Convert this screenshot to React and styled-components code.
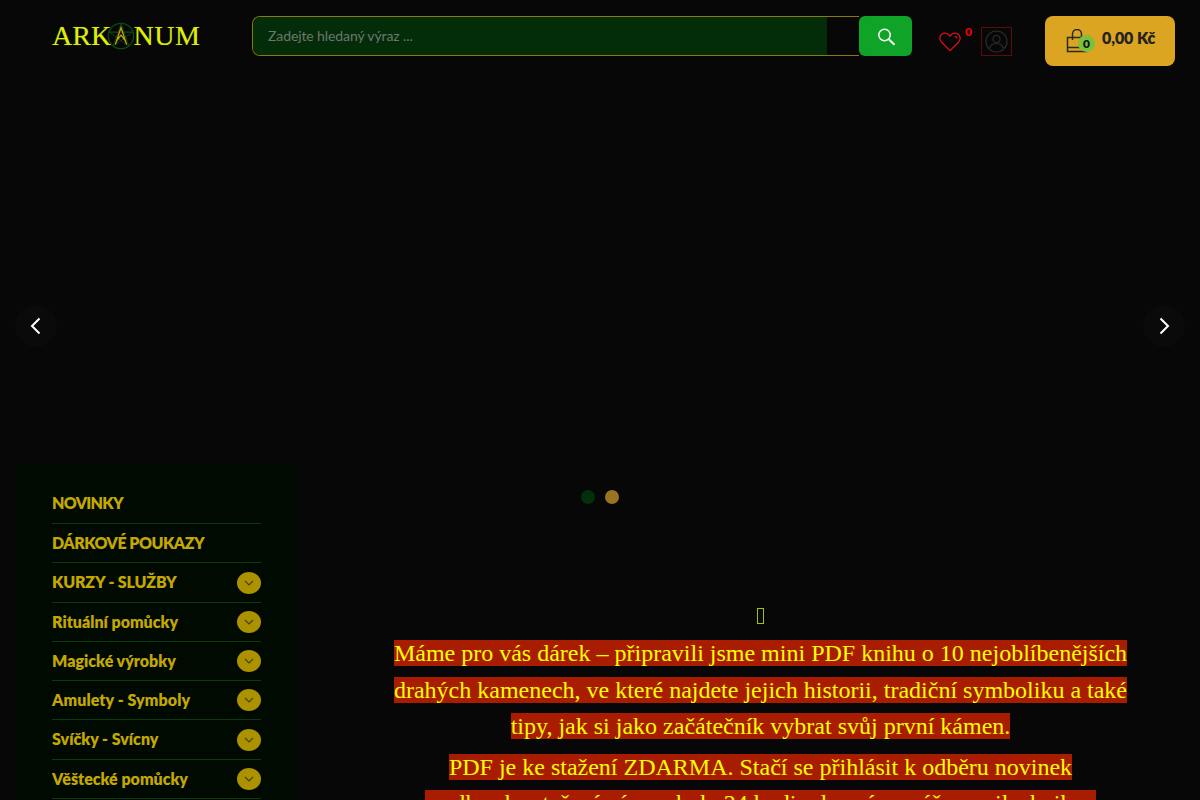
import React from 'react';
import styled, { createGlobalStyle } from 'styled-components';

const Global = createGlobalStyle`
  html, body { margin: 0; padding: 0; height: 800px; overflow: hidden; background: #070708; }
  * { box-sizing: border-box; }
  body { font-family: "Lato", "Noto Sans", sans-serif; }
`;
const Page = styled.div`width: 1200px; height: 800px; overflow: hidden; background: #070708;`;
const Header = styled.header`
  height: 72px; display: flex; align-items: flex-start; padding: 16px 25px 0 52px;
`;
const LogoBox = styled.div`width: 200px; height: 40px; display: flex; align-items: center;`;
const LogoText = styled.div`
  display: flex; align-items: center;
  font-family: "Liberation Serif", serif; font-size: 28px; line-height: 40px; color: #eaea00; letter-spacing: 0.1px;
  text-shadow: 0 0 1px #0f7a18;
`;
const LogoMark = styled.svg`margin: 0 -3px 0 -5px; flex: none;`;
const LogoTail = styled.span`letter-spacing: 0.6px;`;
const SearchForm = styled.form`width: 660px; height: 40px; display: flex; position: relative; margin: 0;`;
const SearchField = styled.div`
  flex: 1; height: 40px; display: flex; border: 1px solid #8a7a08; border-right: 0; border-radius: 8px 0 0 8px; overflow: hidden;
`;
const SearchInput = styled.div`
  width: 574px; background: #032d09; color: #6f756f; font-size: 14px; line-height: 38px; padding-left: 15px; letter-spacing: -0.1px;
`;
const SearchButton = styled.div`
  width: 53px; height: 40px; background: #0fa327; border-radius: 6px; display: flex; align-items: center; justify-content: center;
`;
const Wish = styled.div`position: relative; width: 42px; height: 40px; margin-left: 27px; padding-top: 16px;`;
const WishCount = styled.span`
  position: absolute; left: 26px; top: 9px; color: #f00000; font-size: 12px; font-weight: 900; line-height: 14px;
`;
const UserBox = styled.div`
  width: 31px; height: 29px; margin-top: 11px; border: 1px solid #5c0c0c; display: flex; align-items: center; justify-content: center;
`;
const Cart = styled.div`
  width: 130px; height: 50px; margin-left: 33px; background: #dba521; border-radius: 8px; display: flex; align-items: flex-start; padding: 12px 0 0 21px;
  position: relative; color: #23231f;
`;
const CartBadge = styled.span`
  position: absolute; left: 33px; top: 19px; width: 17px; height: 17px; border-radius: 50%; background: #79c13e; color: #15180f;
  font-size: 12px; font-weight: 800; display: flex; align-items: center; justify-content: center;
`;
const CartPrice = styled.span`margin-left: 14px; font-size: 16px; font-weight: 800; line-height: 20px; letter-spacing: -0.1px;`;
const Hero = styled.section`position: relative; height: 448px;`;
const Arrow = styled.div`
  position: absolute; top: 233px; ${p => (p.$right ? 'right: 15px;' : 'left: 15px;')}
  width: 42px; height: 42px; border-radius: 50%; background: #0a0a0a; display: flex; align-items: center; justify-content: center;
`;
const Dots = styled.div`position: absolute; top: 418px; left: 581px; display: flex; gap: 10px;`;
const Dot = styled.span`width: 14px; height: 14px; border-radius: 50%; background: ${p => p.$c};`;
const Main = styled.main`display: flex; margin-top: -57px; padding-left: 15px;`;
const Sidebar = styled.aside`width: 281px; padding: 21px 35px 0 37px; background: #000a00; border-radius: 6px 6px 0 0; flex: none;`;
const NavRow = styled.div`
  display: flex; align-items: center; justify-content: space-between; height: ${p => p.$h}px;
  border-bottom: 1px solid #0c3a10; color: #c4a800; font-size: 16px; font-weight: 800;
`;
const NavLabel = styled.span`margin-bottom: 2px; letter-spacing: ${p => p.$track}px;`;
const Chevron = styled.span`
  width: 24px; height: 22px; border-radius: 50%; background: #ad9200; display: flex; align-items: center; justify-content: center;
`;
const Content = styled.div`flex: 1; padding: 136px 67px 0 92px; text-align: center; font-family: "Liberation Serif", serif; color: #ffff00;`;
const GlyphRow = styled.div`height: 36px; display: flex; justify-content: center; padding-top: 9px;`;
const MissingGlyph = styled.span`width: 7px; height: 16px; border: 1px solid #a0c400;`;
const Para = styled.p`margin: 0 0 4px; font-size: 24px; line-height: 36.5px;`;
const Mark = styled.span`background: #a81c00;`;

const nav = [
  ['NOVINKY', 40, false, -0.7], ['DÁRKOVÉ POUKAZY', 39, false, -0.5], ['KURZY - SLUŽBY', 40, true, -0.15],
  ['Rituální pomůcky', 39, true, 0], ['Magické výrobky', 39, true, 0], ['Amulety - Symboly', 39, true, 0.1],
  ['Svíčky - Svícny', 40, true, 0], ['Věštecké pomůcky', 39, true, 0],
];

export default function App() {
  return (
    <Page>
      <Global />
      <Header>
        <LogoBox>
          <LogoText>ARK
            <LogoMark width="30" height="30" viewBox="0 0 32 32">
              <circle cx="16" cy="16" r="13.500" fill="none" stroke="#0b4a12" strokeWidth="1.300" />
              <path d="M2.500 12H29.500M7.500 27 16 2.500 24.500 27 3.500 11.800 28.500 11.800 7.500 27" fill="none" stroke="#0a4410" strokeWidth="1" />
              <path d="M10 25 16 7 22 25M11.500 21 16 15 20.500 21" fill="none" stroke="#c8a010" strokeWidth="1.400" />
            </LogoMark>
            <LogoTail>NUM</LogoTail></LogoText>
        </LogoBox>
        <SearchForm>
          <SearchField><SearchInput>Zadejte hledaný výraz ...</SearchInput></SearchField>
          <SearchButton>
            <svg width="20" height="20" viewBox="0 0 20 20" fill="none" stroke="#fff" strokeWidth="1.500">
              <circle cx="8.500" cy="9" r="5.700" /><path d="M12.800 13.200 18.500 18.700" strokeWidth="2" />
            </svg>
          </SearchButton>
        </SearchForm>
        <Wish>
          <svg width="22" height="20" viewBox="0 0 24 22" fill="none" stroke="#e0101a" strokeWidth="1.400">
            <path d="M12 20.500 2.500 11C0 8.300.5 4.500 3 2.600 5.800.5 9.800 1 12 4.500 14.200 1 18.200.5 21 2.600 23.500 4.500 24 8.300 21.500 11Z" />
            <path d="M17 4.500c1.500.3 2.500 1.200 3 2.500" />
          </svg>
          <WishCount>0</WishCount>
        </Wish>
        <UserBox>
          <svg width="23" height="23" viewBox="0 0 23 23" fill="none" stroke="#2b2b2b" strokeWidth="1.200">
            <circle cx="11.500" cy="11.500" r="10.500" /><circle cx="11.500" cy="9" r="3.500" />
            <path d="M4.500 18.500c1-3.500 3.500-5 7-5s6 1.500 7 5" />
          </svg>
        </UserBox>
        <Cart>
          <svg width="22" height="24" viewBox="0 0 22 24" fill="none" stroke="#2a2a22" strokeWidth="1.500" style={{ marginTop: 1 }}>
            <path d="M1.500 8.500H20.500V22.500H1.500ZM1.500 18.500H20.500" />
            <path d="M6.500 11V5a4.500 4.500 0 0 1 9 0V11" />
          </svg>
          <CartBadge>0</CartBadge>
          <CartPrice>0,00 Kč</CartPrice>
        </Cart>
      </Header>
      <Hero>
        <Arrow>
          <svg width="12" height="18" viewBox="0 0 12 18" fill="none" stroke="#fff" strokeWidth="2"><path d="M9.500 1.500 2 9l7.500 7.500" /></svg>
        </Arrow>
        <Arrow $right>
          <svg width="12" height="18" viewBox="0 0 12 18" fill="none" stroke="#fff" strokeWidth="2"><path d="M2.500 1.500 10 9l-7.500 7.500" /></svg>
        </Arrow>
        <Dots><Dot $c="#03300a" /><Dot $c="#9a7420" /></Dots>
      </Hero>
      <Main>
        <Sidebar>
          {nav.map(([t, h, c, track]) => (
            <NavRow key={t} $h={h}>
              <NavLabel $track={track}>{t}</NavLabel>
              {c && (
                <Chevron>
                  <svg width="10" height="6" viewBox="0 0 10 6" fill="none" stroke="#4a3f10" strokeWidth="1.200"><path d="M1 1 5 5 9 1" /></svg>
                </Chevron>
              )}
            </NavRow>
          ))}
        </Sidebar>
        <Content>
          <GlyphRow><MissingGlyph /></GlyphRow>
          <Para><Mark>Máme pro vás dárek – připravili jsme mini PDF knihu o 10 nejoblíbenějších drahých kamenech, ve které najdete jejich historii, tradiční symboliku a také tipy, jak si jako začátečník vybrat svůj první kámen.</Mark></Para>
          <Para><Mark>PDF je ke stažení ZDARMA. Stačí se přihlásit k odběru novinek<br />a odkaz ke stažení vám pak do 24 hodin dorazí na váš e-mail s knihou</Mark></Para>
        </Content>
      </Main>
    </Page>
  );
}
